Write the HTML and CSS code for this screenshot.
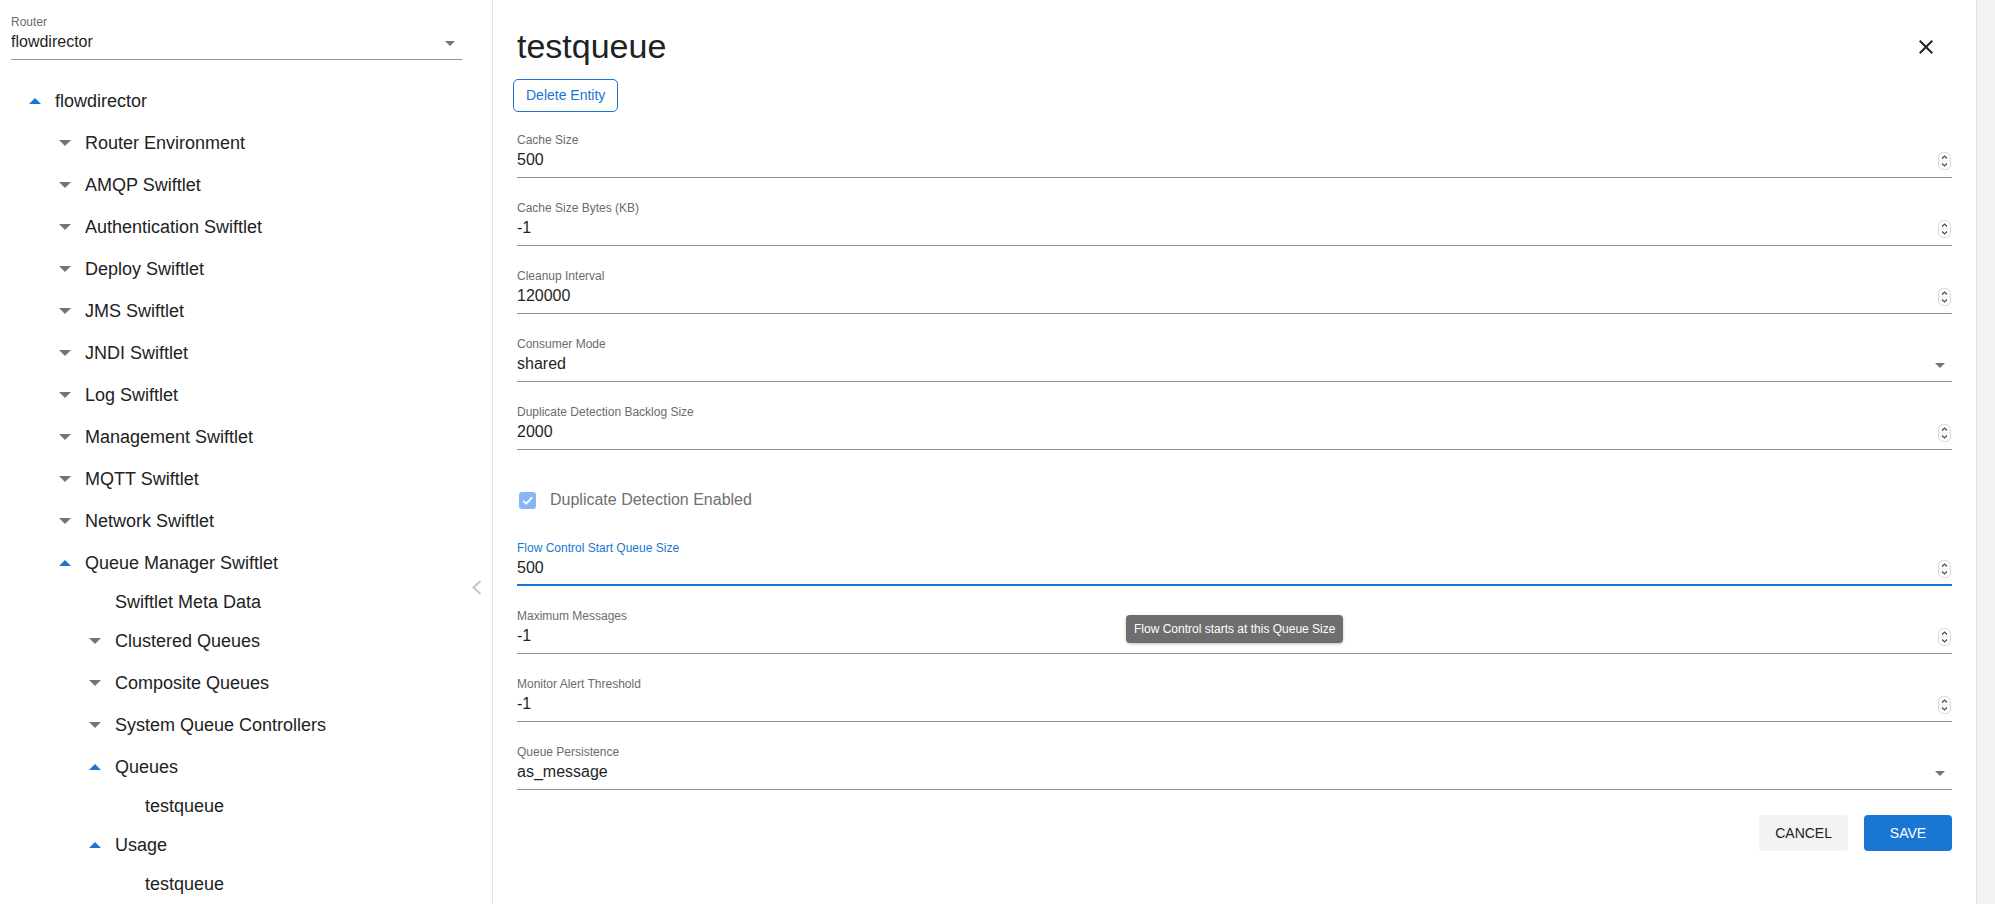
FILE: index.html
```html
<!DOCTYPE html>
<html lang="en">
<head>
<meta charset="utf-8">
<title>testqueue</title>
<link rel="stylesheet" href="styles.css">
</head>
<body>
<div class="app">
  <aside class="sidebar">
    <div class="field router">
      <div class="label">Router</div>
      <div class="value-row"><span>flowdirector</span><svg class="dd" width="10" height="5" viewBox="0 0 10 5"><path d="M0 0h10L5 5z"/></svg></div>
    </div>
    <ul class="tree">
      <li class="node l0"><span class="tw"><svg class="up" width="12" height="6" viewBox="0 0 12 6"><path d="M0 6h12L6 0z"/></svg></span><span>flowdirector</span></li>
      <li class="node l1"><span class="tw"><svg class="down" width="12" height="6" viewBox="0 0 12 6"><path d="M0 0h12L6 6z"/></svg></span><span>Router Environment</span></li>
      <li class="node l1"><span class="tw"><svg class="down" width="12" height="6" viewBox="0 0 12 6"><path d="M0 0h12L6 6z"/></svg></span><span>AMQP Swiftlet</span></li>
      <li class="node l1"><span class="tw"><svg class="down" width="12" height="6" viewBox="0 0 12 6"><path d="M0 0h12L6 6z"/></svg></span><span>Authentication Swiftlet</span></li>
      <li class="node l1"><span class="tw"><svg class="down" width="12" height="6" viewBox="0 0 12 6"><path d="M0 0h12L6 6z"/></svg></span><span>Deploy Swiftlet</span></li>
      <li class="node l1"><span class="tw"><svg class="down" width="12" height="6" viewBox="0 0 12 6"><path d="M0 0h12L6 6z"/></svg></span><span>JMS Swiftlet</span></li>
      <li class="node l1"><span class="tw"><svg class="down" width="12" height="6" viewBox="0 0 12 6"><path d="M0 0h12L6 6z"/></svg></span><span>JNDI Swiftlet</span></li>
      <li class="node l1"><span class="tw"><svg class="down" width="12" height="6" viewBox="0 0 12 6"><path d="M0 0h12L6 6z"/></svg></span><span>Log Swiftlet</span></li>
      <li class="node l1"><span class="tw"><svg class="down" width="12" height="6" viewBox="0 0 12 6"><path d="M0 0h12L6 6z"/></svg></span><span>Management Swiftlet</span></li>
      <li class="node l1"><span class="tw"><svg class="down" width="12" height="6" viewBox="0 0 12 6"><path d="M0 0h12L6 6z"/></svg></span><span>MQTT Swiftlet</span></li>
      <li class="node l1"><span class="tw"><svg class="down" width="12" height="6" viewBox="0 0 12 6"><path d="M0 0h12L6 6z"/></svg></span><span>Network Swiftlet</span></li>
      <li class="node l1"><span class="tw"><svg class="up" width="12" height="6" viewBox="0 0 12 6"><path d="M0 6h12L6 0z"/></svg></span><span>Queue Manager Swiftlet</span></li>
      <li class="node leaf l2"><span class="tw"></span><span>Swiftlet Meta Data</span></li>
      <li class="node l2"><span class="tw"><svg class="down" width="12" height="6" viewBox="0 0 12 6"><path d="M0 0h12L6 6z"/></svg></span><span>Clustered Queues</span></li>
      <li class="node l2"><span class="tw"><svg class="down" width="12" height="6" viewBox="0 0 12 6"><path d="M0 0h12L6 6z"/></svg></span><span>Composite Queues</span></li>
      <li class="node l2"><span class="tw"><svg class="down" width="12" height="6" viewBox="0 0 12 6"><path d="M0 0h12L6 6z"/></svg></span><span>System Queue Controllers</span></li>
      <li class="node l2"><span class="tw"><svg class="up" width="12" height="6" viewBox="0 0 12 6"><path d="M0 6h12L6 0z"/></svg></span><span>Queues</span></li>
      <li class="node leaf l3"><span class="tw"></span><span>testqueue</span></li>
      <li class="node l2"><span class="tw"><svg class="up" width="12" height="6" viewBox="0 0 12 6"><path d="M0 6h12L6 0z"/></svg></span><span>Usage</span></li>
      <li class="node leaf l3"><span class="tw"></span><span>testqueue</span></li>
    </ul>
    <svg class="collapse" width="11" height="15" viewBox="0 0 11 15"><path d="M9.5 1L2.5 7.5L9.5 14"/></svg>
  </aside>

  <main class="panel">
    <div class="title-row">
      <h1 class="title">testqueue</h1>
      <svg class="close" width="24" height="24" viewBox="0 0 24 24"><path d="M19 6.41 17.59 5 12 10.59 6.41 5 5 6.41 10.59 12 5 17.59 6.41 19 12 13.41 17.59 19 19 17.59 13.41 12z"/></svg>
    </div>
    <button class="btn-outline">Delete Entity</button>

    <div class="fields">
      <div class="field">
        <div class="label">Cache Size</div>
        <div class="value-row"><span>500</span><svg class="spin" width="13" height="18" viewBox="0 0 13 18"><rect x="0.5" y="0.5" width="12" height="17" rx="5"/><path class="sep" d="M1 9h11"/><path class="chev" d="M4 6.5L6.5 4L9 6.5M4 11.5L6.5 14L9 11.5"/></svg></div>
      </div>
      <div class="field">
        <div class="label">Cache Size Bytes (KB)</div>
        <div class="value-row"><span>-1</span><svg class="spin" width="13" height="18" viewBox="0 0 13 18"><rect x="0.5" y="0.5" width="12" height="17" rx="5"/><path class="sep" d="M1 9h11"/><path class="chev" d="M4 6.5L6.5 4L9 6.5M4 11.5L6.5 14L9 11.5"/></svg></div>
      </div>
      <div class="field">
        <div class="label">Cleanup Interval</div>
        <div class="value-row"><span>120000</span><svg class="spin" width="13" height="18" viewBox="0 0 13 18"><rect x="0.5" y="0.5" width="12" height="17" rx="5"/><path class="sep" d="M1 9h11"/><path class="chev" d="M4 6.5L6.5 4L9 6.5M4 11.5L6.5 14L9 11.5"/></svg></div>
      </div>
      <div class="field">
        <div class="label">Consumer Mode</div>
        <div class="value-row"><span>shared</span><svg class="dd" width="10" height="5" viewBox="0 0 10 5"><path d="M0 0h10L5 5z"/></svg></div>
      </div>
      <div class="field">
        <div class="label">Duplicate Detection Backlog Size</div>
        <div class="value-row"><span>2000</span><svg class="spin" width="13" height="18" viewBox="0 0 13 18"><rect x="0.5" y="0.5" width="12" height="17" rx="5"/><path class="sep" d="M1 9h11"/><path class="chev" d="M4 6.5L6.5 4L9 6.5M4 11.5L6.5 14L9 11.5"/></svg></div>
      </div>
      <div class="check-row">
        <div class="check-inner">
          <span class="checkbox"><svg width="17" height="17" viewBox="0 0 17 17"><path d="M4.2 8.8L7.2 11.8L12.9 5.4"/></svg></span>
          <span class="check-label">Duplicate Detection Enabled</span>
        </div>
      </div>
      <div class="field focused">
        <div class="label">Flow Control Start Queue Size</div>
        <div class="value-row"><span>500</span><svg class="spin" width="13" height="18" viewBox="0 0 13 18"><rect x="0.5" y="0.5" width="12" height="17" rx="5"/><path class="sep" d="M1 9h11"/><path class="chev" d="M4 6.5L6.5 4L9 6.5M4 11.5L6.5 14L9 11.5"/></svg></div>
      </div>
      <div class="field">
        <div class="label">Maximum Messages</div>
        <div class="value-row"><span>-1</span><svg class="spin" width="13" height="18" viewBox="0 0 13 18"><rect x="0.5" y="0.5" width="12" height="17" rx="5"/><path class="sep" d="M1 9h11"/><path class="chev" d="M4 6.5L6.5 4L9 6.5M4 11.5L6.5 14L9 11.5"/></svg></div>
      </div>
      <div class="field">
        <div class="label">Monitor Alert Threshold</div>
        <div class="value-row"><span>-1</span><svg class="spin" width="13" height="18" viewBox="0 0 13 18"><rect x="0.5" y="0.5" width="12" height="17" rx="5"/><path class="sep" d="M1 9h11"/><path class="chev" d="M4 6.5L6.5 4L9 6.5M4 11.5L6.5 14L9 11.5"/></svg></div>
      </div>
      <div class="field">
        <div class="label">Queue Persistence</div>
        <div class="value-row"><span>as_message</span><svg class="dd" width="10" height="5" viewBox="0 0 10 5"><path d="M0 0h10L5 5z"/></svg></div>
      </div>
    </div>

    <div class="actions">
      <button class="btn btn-cancel">Cancel</button>
      <button class="btn btn-save">Save</button>
    </div>

    <div class="tooltip">Flow Control starts at this Queue Size</div>
  </main>

  <div class="scrollstrip"></div>
</div>
</body>
</html>
```

FILE: styles.css
```css
* { box-sizing: border-box; }

html, body {
  margin: 0;
  padding: 0;
  height: 100%;
}

body {
  font-family: "Liberation Sans", Arial, Helvetica, sans-serif;
  color: #212121;
  background: #fff;
  overflow: hidden;
}

.app {
  display: flex;
  height: 904px;
}

/* ---------- sidebar ---------- */
.sidebar {
  width: 493px;
  flex: none;
  border-right: 1px solid #e6e6e6;
  padding-left: 11px;
  position: relative;
}

.field {
  height: 68px;
  padding-top: 22px;
  border-bottom: 1px solid #949494;
}

.field.router {
  width: 451px;
  height: 60px;
  padding-top: 14px;
}

.label {
  font-size: 12px;
  line-height: 16px;
  height: 16px;
  color: #6b6b6b;
  white-space: nowrap;
}

.value-row {
  display: flex;
  align-items: center;
  justify-content: space-between;
  height: 24px;
  font-size: 16px;
  line-height: 24px;
  color: #1f1f1f;
}

.dd {
  fill: #757575;
  margin-right: 7px;
  margin-top: 2px;
}

.tree {
  list-style: none;
  margin: 20px 0 0 -11px;
  padding: 0;
}

.node {
  display: flex;
  align-items: center;
  height: 42px;
  font-size: 18px;
  color: #222;
  white-space: nowrap;
}

.node.leaf { height: 36px; }

.l0 { padding-left: 23px; }
.l1 { padding-left: 53px; }
.l2 { padding-left: 83px; }
.l3 { padding-left: 113px; }

.tw {
  width: 24px;
  height: 24px;
  margin-right: 8px;
  display: flex;
  align-items: center;
  justify-content: center;
  flex: none;
}

.tw .up { fill: #1976d2; }
.tw .down { fill: #757575; }

.collapse {
  position: absolute;
  left: 471px;
  top: 580px;
  fill: none;
  stroke: #c6c6c6;
  stroke-width: 2;
}

/* ---------- main panel ---------- */
.panel {
  width: 1483px;
  flex: none;
  padding: 26px 24px 0;
  display: flex;
  flex-direction: column;
  position: relative;
}

.title-row {
  display: flex;
  align-items: center;
  justify-content: space-between;
  height: 40px;
}

.title {
  margin: 0;
  font-size: 34px;
  font-weight: 400;
  line-height: 40px;
  color: #212121;
}

.close {
  fill: #222;
  margin-right: 14px;
  margin-top: 2px;
}

.btn-outline {
  align-self: flex-start;
  margin: 13px 0 0 -4px;
  height: 33px;
  padding: 0 12px;
  border: 1px solid #1976d2;
  border-radius: 5px;
  background: #fff;
  color: #1976d2;
  font-family: inherit;
  font-size: 14px;
  line-height: 31px;
}

.fields {
  margin-top: -2px;
}

.spin {
  margin-right: 1px;
  margin-top: 2px;
}

.spin rect {
  fill: #fff;
  stroke: #d6d6d6;
}

.spin .sep {
  stroke: #ececec;
}

.spin .chev {
  fill: none;
  stroke: #4a4a4a;
  stroke-width: 1.2;
}

.field.focused {
  border-bottom: 2px solid #1976d2;
}

.field.focused .label {
  color: #1976d2;
}

.check-row {
  height: 68px;
  padding: 41px 0 0 2px;
}

.check-inner {
  display: flex;
  align-items: center;
  height: 18px;
}

.checkbox {
  width: 17px;
  height: 17px;
  border-radius: 3px;
  background: #87b6f4;
  display: flex;
  margin-right: 14px;
  flex: none;
}

.checkbox path {
  fill: none;
  stroke: #fff;
  stroke-width: 1.8;
}

.check-label {
  font-size: 16px;
  line-height: 18px;
  color: #707070;
}

.actions {
  display: flex;
  justify-content: flex-end;
  gap: 16px;
  margin-top: 25px;
}

.btn {
  min-width: 88px;
  height: 36px;
  padding: 0 16px;
  border: 0;
  border-radius: 4px;
  font-family: inherit;
  font-size: 14px;
  text-transform: uppercase;
}

.btn-cancel {
  background: #f3f3f3;
  color: #222;
}

.btn-save {
  background: #1976d2;
  color: #fff;
}

.tooltip {
  position: absolute;
  left: 633px;
  top: 615px;
  padding: 6px 8px;
  font-size: 12px;
  line-height: 16px;
  color: #fff;
  background: #6e6e6e;
  border-radius: 4px;
  box-shadow: 0 1px 3px rgba(0, 0, 0, 0.25);
  white-space: nowrap;
}

/* ---------- scrollbar strip ---------- */
.scrollstrip {
  flex: 1;
  background: #f3f3f3;
  border-left: 1px solid #e2e2e2;
}
```
